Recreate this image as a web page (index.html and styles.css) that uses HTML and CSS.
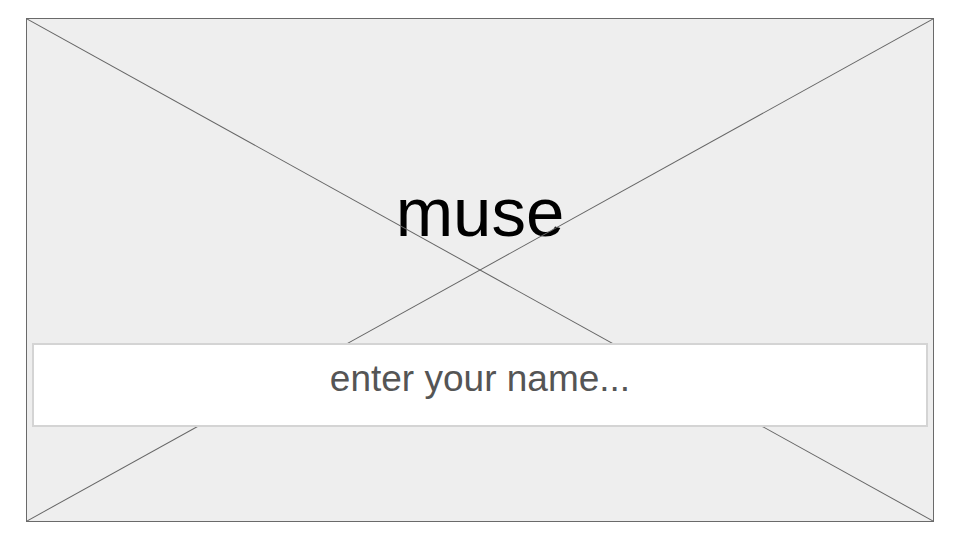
FILE: index.html
```html
<!DOCTYPE html>
<html lang="en">
<head>
<meta charset="utf-8">
<title>muse</title>
<link rel="stylesheet" href="styles.css">
</head>
<body>
  <main class="frame">
    <h1 class="title">muse</h1>
    <svg class="cross" viewBox="0 0 100 100" preserveAspectRatio="none" aria-hidden="true">
      <line x1="0" y1="0" x2="100" y2="100" vector-effect="non-scaling-stroke"/>
      <line x1="100" y1="0" x2="0" y2="100" vector-effect="non-scaling-stroke"/>
    </svg>
    <div class="name-field">enter your name...</div>
  </main>
</body>
</html>
```
FILE: styles.css
```css
html, body {
  margin: 0;
  padding: 0;
  background: #ffffff;
}

body {
  padding: 18px 26px;
  font-family: "Liberation Sans", Arial, sans-serif;
}

.frame {
  position: relative;
  box-sizing: border-box;
  width: 908px;
  height: 504px;
  border: 1px solid #6a6a6a;
  background: #eeeeee;
  padding: 154px 5px 0;
  display: flex;
  flex-direction: column;
  align-items: stretch;
}

.title {
  margin: 0;
  font-size: 69px;
  font-weight: normal;
  line-height: 80px;
  color: #000000;
  text-align: center;
}

.cross {
  position: absolute;
  inset: 0;
  width: 100%;
  height: 100%;
}

.cross line {
  stroke: #666666;
  stroke-width: 1;
}

.name-field {
  position: relative;
  z-index: 1;
  box-sizing: border-box;
  margin-top: 90px;
  height: 84px;
  border: 2px solid #d4d4d4;
  background: #ffffff;
  color: #555555;
  font-size: 37px;
  line-height: 67px;
  padding-bottom: 13px;
  text-align: center;
}
```
